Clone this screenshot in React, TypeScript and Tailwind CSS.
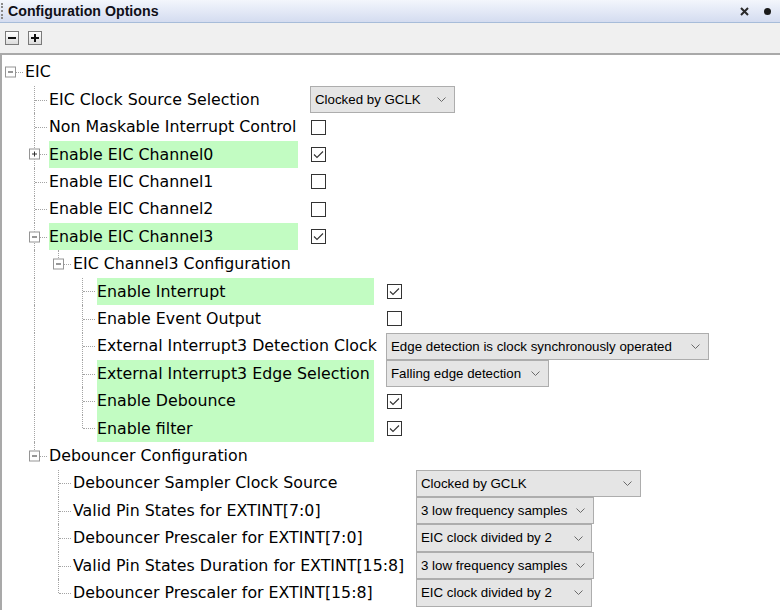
import React from "react";

type Row = {
  lv: number;
  label: string;
  exp?: "plus" | "minus";
  last: boolean;
  anc: boolean[];
  green?: boolean;
  cb?: boolean;
  dd?: string;
  ddW?: string;
};

const rows: Row[] = [
  { lv: 0, label: "EIC", exp: "minus", last: true, anc: [] },
  { lv: 1, label: "EIC Clock Source Selection", last: false, anc: [false], dd: "Clocked by GCLK", ddW: "w-[145px]" },
  { lv: 1, label: "Non Maskable Interrupt Control", last: false, anc: [false], cb: false },
  { lv: 1, label: "Enable EIC Channel0", exp: "plus", last: false, anc: [false], cb: true, green: true },
  { lv: 1, label: "Enable EIC Channel1", last: false, anc: [false], cb: false },
  { lv: 1, label: "Enable EIC Channel2", last: false, anc: [false], cb: false },
  { lv: 1, label: "Enable EIC Channel3", exp: "minus", last: false, anc: [false], cb: true, green: true },
  { lv: 2, label: "EIC Channel3 Configuration", exp: "minus", last: true, anc: [false, true] },
  { lv: 3, label: "Enable Interrupt", last: false, anc: [false, true, false], cb: true, green: true },
  { lv: 3, label: "Enable Event Output", last: false, anc: [false, true, false], cb: false },
  { lv: 3, label: "External Interrupt3 Detection Clock", last: false, anc: [false, true, false], dd: "Edge detection is clock synchronously operated", ddW: "w-[323px]" },
  { lv: 3, label: "External Interrupt3 Edge Selection", last: false, anc: [false, true, false], dd: "Falling edge detection", ddW: "w-[163px]", green: true },
  { lv: 3, label: "Enable Debounce", last: false, anc: [false, true, false], cb: true, green: true },
  { lv: 3, label: "Enable filter", last: true, anc: [false, true, false], cb: true, green: true },
  { lv: 1, label: "Debouncer Configuration", exp: "minus", last: true, anc: [false] },
  { lv: 2, label: "Debouncer Sampler Clock Source", last: false, anc: [false, false], dd: "Clocked by GCLK", ddW: "w-[225px]" },
  { lv: 2, label: "Valid Pin States for EXTINT[7:0]", last: false, anc: [false, false], dd: "3 low frequency samples", ddW: "w-[178px]" },
  { lv: 2, label: "Debouncer Prescaler for EXTINT[7:0]", last: false, anc: [false, false], dd: "EIC clock divided by 2", ddW: "w-[176px]" },
  { lv: 2, label: "Valid Pin States Duration for EXTINT[15:8]", last: false, anc: [false, false], dd: "3 low frequency samples", ddW: "w-[178px]" },
  { lv: 2, label: "Debouncer Prescaler for EXTINT[15:8]", last: true, anc: [false, false], dd: "EIC clock divided by 2", ddW: "w-[176px]" },
];

const labelW: Record<number, string> = {
  1: "w-[249px]",
  2: "w-[331px]",
  3: "w-[277px]",
};

function Expander({ kind }: { kind: "plus" | "minus" }) {
  return (
    <div className="relative w-[11px] h-[11px] border border-[#959595] bg-white">
      <div className="absolute left-[2px] top-[4px] w-[5px] h-px bg-[#303030]" />
      {kind === "plus" && <div className="absolute left-[4px] top-[2px] w-px h-[5px] bg-[#303030]" />}
    </div>
  );
}

function Cell({ k, row }: { k: number; row: Row }) {
  const first = k === 0;
  const w = first ? "w-[23px]" : "w-[24px]";
  const lineX = first ? "left-[8px]" : "left-[9px]";
  if (k < row.lv) {
    return (
      <div className={`relative ${w} h-full shrink-0`}>
        {row.anc[k] && <div className={`absolute ${lineX} top-0 bottom-0 border-l border-dotted border-[#a4a4a4]`} />}
      </div>
    );
  }
  return (
    <div className={`relative ${w} h-full shrink-0`}>
      {row.lv > 0 && (
        <div className={`absolute ${lineX} top-0 ${row.last ? "h-1/2" : "bottom-0"} border-l border-dotted border-[#a4a4a4]`} />
      )}
      <div
        className={`absolute top-1/2 border-t border-dotted border-[#a4a4a4] ${first ? "left-[14px]" : "left-[10px]"} right-[2px]`}
      />
      {row.exp && (
        <div className={`absolute top-1/2 -translate-y-1/2 ${first ? "left-[3px]" : "left-[4px]"}`}>
          <Expander kind={row.exp} />
        </div>
      )}
    </div>
  );
}

function Checkbox({ checked }: { checked: boolean }) {
  return (
    <div className="ml-[1px] w-[15px] h-[15px] border border-[#333] bg-white flex items-center justify-center">
      {checked && (
        <svg width="13" height="13" viewBox="0 0 13 13">
          <polyline points="2,6.5 5,9.5 11,3.5" fill="none" stroke="#333" strokeWidth="1.1" />
        </svg>
      )}
    </div>
  );
}

function Dropdown({ text, w }: { text: string; w: string }) {
  return (
    <div
      className={`${w} h-full flex items-center border border-[#adadad] bg-[#e5e5e5] pl-[4px] pr-[8px] text-[13.3px] font-['Liberation_Sans',Arial,sans-serif] text-black`}
    >
      <span className="flex-1 whitespace-nowrap">{text}</span>
      <svg width="9" height="5" viewBox="0 0 9 5" className="shrink-0">
        <polyline points="0.5,0.5 4.5,4.5 8.5,0.5" fill="none" stroke="#6a6a6a" strokeWidth="1" />
      </svg>
    </div>
  );
}

function TreeRow({ row }: { row: Row }) {
  const cells = [];
  for (let k = 0; k <= row.lv; k++) cells.push(<Cell key={k} k={k} row={row} />);
  const hasValue = row.cb !== undefined || row.dd !== undefined;
  return (
    <div className="flex items-center h-[27.42px]">
      {cells}
      <div
        className={`h-full flex items-center whitespace-nowrap shrink-0 ${hasValue ? labelW[row.lv] : ""} ${
          row.green ? "bg-[#c2fcc2]" : ""
        }`}
      >
        {row.label}
      </div>
      {hasValue && (
        <div className="ml-[12px] h-full flex items-center">
          {row.cb !== undefined && <Checkbox checked={row.cb} />}
          {row.dd !== undefined && <Dropdown text={row.dd} w={row.ddW || ""} />}
        </div>
      )}
    </div>
  );
}

function ToolButton({ plus }: { plus?: boolean }) {
  return (
    <div className="relative w-[14px] h-[14px] border border-[#7a7a7a] bg-linear-to-b from-[#ffffff] to-[#dcdcdc]">
      <div className="absolute left-[2px] top-[5px] w-[8px] h-[2px] bg-[#111]" />
      {plus && <div className="absolute left-[5px] top-[2px] w-[2px] h-[8px] bg-[#111]" />}
    </div>
  );
}

export default function App() {
  return (
    <div className="w-[780px] h-[610px] overflow-hidden bg-white font-['DejaVu_Sans',Verdana,sans-serif] text-black">
      <div className="h-[23px] flex items-center border-b border-[#a7bcd9] bg-linear-to-b from-[#f3f6fc] to-[#d4dcf0]">
        <div className="ml-[1px] w-[2px] h-[16px] border-l-2 border-dotted border-[#8a8a8a]" />
        <div className="ml-[5px] text-[14.2px] font-bold font-['Liberation_Sans',Arial,sans-serif] text-[#101018] leading-none">
          Configuration Options
        </div>
        <div className="flex-1" />
        <svg width="9" height="9" viewBox="0 0 9 9" className="mr-[15px]">
          <path d="M1 1 L8 8 M8 1 L1 8" stroke="#2a2a2a" strokeWidth="2" />
        </svg>
        <div className="w-[7px] h-[7px] rounded-full bg-[#1a1a1a] mr-[9px]" />
      </div>
      <div className="h-[32px] flex items-center gap-[9px] pl-[5px] bg-[#f0f0f0] border-b-2 border-[#a9a9a9]">
        <ToolButton />
        <ToolButton plus />
      </div>
      <div className="h-[555px] border-l-2 border-[#a9a9a9] pt-[3.5px] text-[15.8px] leading-none">
        {rows.map((r, i) => (
          <TreeRow key={i} row={r} />
        ))}
      </div>
    </div>
  );
}
